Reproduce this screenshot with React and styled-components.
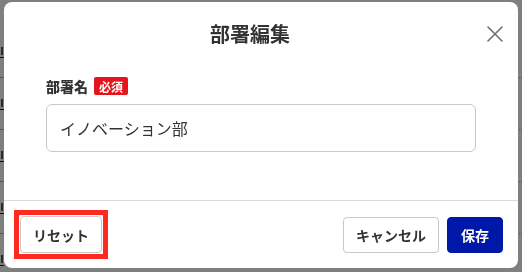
import { createGlobalStyle } from "styled-components"
import styled from "styled-components"

const GlobalStyle = createGlobalStyle`
  html, body {
    margin: 0;
    padding: 0;
    background: #ffffff;
    font-family: "Noto Sans CJK JP", "Noto Sans", sans-serif;
    color: #333;
  }
  * { box-sizing: border-box; }
`

const Page = styled.div`
  width: 522px;
  height: 272px;
  overflow: hidden;
  padding-top: 26px;
`

const PageRow = styled.div`
  height: 52px;
  display: flex;
  align-items: center;
  border-bottom: 1px dotted #999;
`

const PageMark = styled.span`
  width: 4px;
  height: 12px;
  border-bottom: 1px solid #222;
  background: linear-gradient(#555, #555) center / 2px 8px no-repeat;
`

const Overlay = styled.div`
  position: fixed;
  inset: 0;
  background: rgba(0, 0, 0, 0.5);
`

const Dialog = styled.div`
  position: fixed;
  top: 2px;
  left: 4px;
  width: 514px;
  height: 266px;
  background: #fff;
  border-radius: 8px;
  display: flex;
  flex-direction: column;
  overflow: hidden;
`

const Header = styled.div`
  height: 64px;
  display: flex;
  align-items: center;
  padding: 0 15px 0 17px;
`

const Title = styled.h2`
  flex: 1;
  margin: 0;
  text-align: center;
  font-size: 20px;
  font-weight: 700;
  color: #333;
  line-height: 1;
`

const CloseButton = styled.button`
  width: 24px;
  height: 24px;
  padding: 0;
  border: none;
  background: transparent;
  display: flex;
  align-items: center;
  justify-content: flex-end;
  cursor: pointer;
`

const Body = styled.div`
  padding: 11px 41px 48px 42px;
  border-bottom: 1px solid #d6dbe0;
`

const LabelRow = styled.div`
  height: 18px;
  display: flex;
  align-items: center;
  gap: 6px;
  margin-bottom: 9px;
`

const Label = styled.label`
  font-size: 14px;
  font-weight: 800;
  color: #333;
`

const Badge = styled.span`
  height: 18px;
  padding: 0 5px;
  display: inline-flex;
  align-items: center;
  background: #e8141c;
  color: #fff;
  font-size: 12px;
  font-weight: 700;
  border-radius: 2px;
`

const TextInput = styled.input`
  width: 430px;
  height: 48px;
  padding: 0 13px;
  border: 1px solid #c8c8c8;
  border-radius: 6px;
  font-family: inherit;
  font-size: 16px;
  color: #333;
  outline: none;
`

const Footer = styled.div`
  flex: 1;
  display: flex;
  align-items: center;
  justify-content: space-between;
  padding: 0 15px 0 10px;
`

const Highlight = styled.div`
  display: flex;
  padding: 1px;
  border: 5px solid #ff2a1f;
`

const Actions = styled.div`
  display: flex;
  gap: 8px;
`

const Button = styled.button`
  height: ${p => (p.$tall ? 37 : 36)}px;
  padding: 0 ${p => (p.$primary ? 13 : 12)}px;
  border: 1px solid ${p => (p.$primary ? "#0018a8" : "#c8c8c8")};
  border-radius: 4px;
  background: ${p => (p.$primary ? "#0018a8" : "#fff")};
  color: ${p => (p.$primary ? "#fff" : "#333")};
  font-family: inherit;
  font-size: 14px;
  font-weight: 700;
  cursor: pointer;
`

export default function App() {
  return (
    <>
      <GlobalStyle />
      <Page>
        <PageRow><PageMark /></PageRow>
        <PageRow><PageMark /></PageRow>
        <PageRow><PageMark /></PageRow>
        <PageRow><PageMark /></PageRow>
        <PageRow><PageMark /></PageRow>
      </Page>
      <Overlay />
      <Dialog>
        <Header>
          <Title>部署編集</Title>
          <CloseButton aria-label="閉じる">
            <svg width="16" height="16" viewBox="0 0 16 16">
              <path d="M1 1L15 15M15 1L1 15" stroke="#6f6f6f" strokeWidth="1.6" strokeLinecap="round" />
            </svg>
          </CloseButton>
        </Header>
        <Body>
          <LabelRow>
            <Label>部署名</Label>
            <Badge>必須</Badge>
          </LabelRow>
          <TextInput defaultValue="イノベーション部" />
        </Body>
        <Footer>
          <Highlight>
            <Button $tall>リセット</Button>
          </Highlight>
          <Actions>
            <Button>キャンセル</Button>
            <Button $primary>保存</Button>
          </Actions>
        </Footer>
      </Dialog>
    </>
  )
}
